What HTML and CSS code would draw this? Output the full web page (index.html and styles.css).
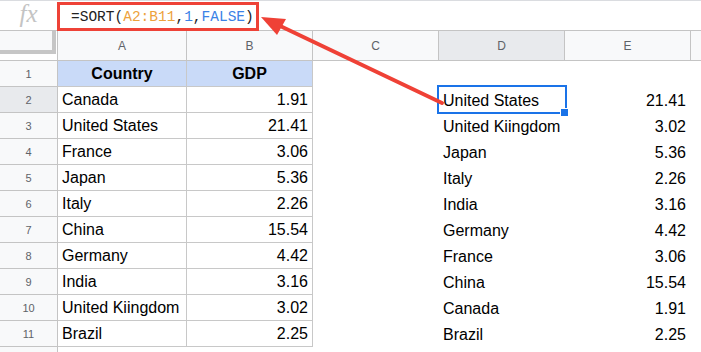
FILE: index.html
```html
<!DOCTYPE html>
<html>
<head>
<meta charset="utf-8">
<link rel="stylesheet" href="styles.css">
</head>
<body>
<div class="fbar">
  <div class="fx">fx</div>
  <div class="formula"><span class="dk">=SORT(</span><span class="or">A2:B11</span><span class="dk">,</span><span class="bl">1</span><span class="dk">,</span><span class="bl">FALSE</span><span class="dk">)</span></div>
</div>
<div class="sheet">
  <div class="row hdr">
    <div class="corner"><div class="corner-in"></div></div>
    <div class="ch">A</div><div class="ch">B</div><div class="ch">C</div><div class="ch sel">D</div><div class="ch">E</div><div class="ch last"></div>
  </div>
  <div class="row">
    <div class="rh">1</div><div class="c tb head">Country</div><div class="c tb head">GDP</div><div class="c"></div><div class="c"></div><div class="c"></div><div class="c"></div>
  </div>
  <div class="row">
    <div class="rh sel">2</div><div class="c tb">Canada</div><div class="c tb num">1.91</div><div class="c"></div><div class="c active">United States<span class="selbox"></span><span class="handle"></span></div><div class="c num">21.41</div><div class="c"></div>
  </div>
  <div class="row">
    <div class="rh">3</div><div class="c tb">United States</div><div class="c tb num">21.41</div><div class="c"></div><div class="c">United Kiingdom</div><div class="c num">3.02</div><div class="c"></div>
  </div>
  <div class="row">
    <div class="rh">4</div><div class="c tb">France</div><div class="c tb num">3.06</div><div class="c"></div><div class="c">Japan</div><div class="c num">5.36</div><div class="c"></div>
  </div>
  <div class="row">
    <div class="rh">5</div><div class="c tb">Japan</div><div class="c tb num">5.36</div><div class="c"></div><div class="c">Italy</div><div class="c num">2.26</div><div class="c"></div>
  </div>
  <div class="row">
    <div class="rh">6</div><div class="c tb">Italy</div><div class="c tb num">2.26</div><div class="c"></div><div class="c">India</div><div class="c num">3.16</div><div class="c"></div>
  </div>
  <div class="row">
    <div class="rh">7</div><div class="c tb">China</div><div class="c tb num">15.54</div><div class="c"></div><div class="c">Germany</div><div class="c num">4.42</div><div class="c"></div>
  </div>
  <div class="row">
    <div class="rh">8</div><div class="c tb">Germany</div><div class="c tb num">4.42</div><div class="c"></div><div class="c">France</div><div class="c num">3.06</div><div class="c"></div>
  </div>
  <div class="row">
    <div class="rh">9</div><div class="c tb">India</div><div class="c tb num">3.16</div><div class="c"></div><div class="c">China</div><div class="c num">15.54</div><div class="c"></div>
  </div>
  <div class="row">
    <div class="rh">10</div><div class="c tb">United Kiingdom</div><div class="c tb num">3.02</div><div class="c"></div><div class="c">Canada</div><div class="c num">1.91</div><div class="c"></div>
  </div>
  <div class="row">
    <div class="rh">11</div><div class="c tb">Brazil</div><div class="c tb num">2.25</div><div class="c"></div><div class="c">Brazil</div><div class="c num">2.25</div><div class="c"></div>
  </div>
  <div class="row tail">
    <div class="rh"></div><div class="c"></div><div class="c"></div><div class="c"></div><div class="c"></div><div class="c"></div><div class="c"></div>
  </div>
</div>
<svg class="arrow" width="701" height="352" viewBox="0 0 701 352">
  <line x1="442" y1="103" x2="276" y2="24" stroke="#ef4136" stroke-width="4" stroke-linecap="round"/>
  <polygon points="261,17 286,19 277,35" fill="#ef4136"/>
</svg>
</body>
</html>
```

FILE: styles.css
```css
html, body {
  margin: 0;
  padding: 0;
}
body {
  width: 701px;
  height: 352px;
  overflow: hidden;
  position: relative;
  background: #fff;
  font-family: "Liberation Sans", Arial, sans-serif;
}
.fbar {
  display: flex;
  align-items: flex-start;
  height: 30px;
  box-sizing: border-box;
  border-top: 1px solid #dadce0;
}
.fx {
  width: 57px;
  height: 29px;
  display: flex;
  align-items: center;
  justify-content: center;
  font: italic 25px "Liberation Serif", "DejaVu Serif", serif;
  color: #c4c4c4;
  padding-bottom: 3px;
  box-sizing: border-box;
}
.formula {
  position: relative;
  z-index: 2;
  margin-top: 1px;
  width: 202px;
  height: 29px;
  box-sizing: border-box;
  border: 3px solid #ee4237;
  padding-left: 11px;
  display: flex;
  align-items: center;
  font: 14.5px "Liberation Mono", "DejaVu Sans Mono", monospace;
  white-space: pre;
  background: #fff;
}
.dk { color: #222; }
.or { color: #eda23c; }
.bl { color: #3b82e6; }

.row {
  display: grid;
  grid-template-columns: 58px 129px 126px 126px 126px 126px 1fr;
  height: 26px;
}
.row.tail {
  height: 5px;
}
.row > div {
  box-sizing: border-box;
}
.row.hdr {
  height: 31px;
}
.corner {
  border-top: 1px solid #c4c4c4;
  border-right: 1px solid #c4c4c4;
  border-bottom: 1px solid #c4c4c4;
  background: #fff;
}
.corner-in {
  width: 52px;
  height: 19px;
  background: #f8f9fa;
  border-right: 4px solid #c6c6c6;
  border-bottom: 4px solid #c6c6c6;
}
.ch {
  border-top: 1px solid #c4c4c4;
  border-right: 1px solid #c4c4c4;
  border-bottom: 1px solid #c4c4c4;
  background: #f8f9fa;
  display: flex;
  align-items: center;
  justify-content: center;
  font-size: 12px;
  color: #5f6368;
}
.ch.sel { background: #e8eaed; }
.ch.last { border-right: none; }
.rh {
  background: #f8f9fa;
  border-right: 1px solid #c4c4c4;
  border-bottom: 1px solid #c4c4c4;
  display: flex;
  align-items: center;
  justify-content: center;
  font-size: 11px;
  color: #5f6368;
}
.tail .rh { border-bottom: none; }
.rh.sel { background: #e8eaed; }
.c {
  display: flex;
  align-items: center;
  padding: 1px 5px 0 4px;
  font-size: 16px;
  color: #000;
  white-space: nowrap;
  position: relative;
}
.c.tb {
  border-right: 1px solid #c8c8c8;
  border-bottom: 1px solid #c8c8c8;
  padding-right: 4px;
}
.c.num { justify-content: flex-end; }
.c.head {
  background: #c9daf8;
  font-weight: bold;
  justify-content: center;
}
.selbox {
  position: absolute;
  left: -2px;
  top: -2px;
  right: -2px;
  bottom: -1px;
  border: 2px solid #1a73e8;
}
.handle {
  position: absolute;
  right: -3px;
  bottom: -3px;
  width: 7px;
  height: 7px;
  background: #1a73e8;
  box-shadow: 0 0 0 1px #fff;
}
.arrow {
  position: absolute;
  left: 0;
  top: 0;
  z-index: 5;
  pointer-events: none;
}
```
